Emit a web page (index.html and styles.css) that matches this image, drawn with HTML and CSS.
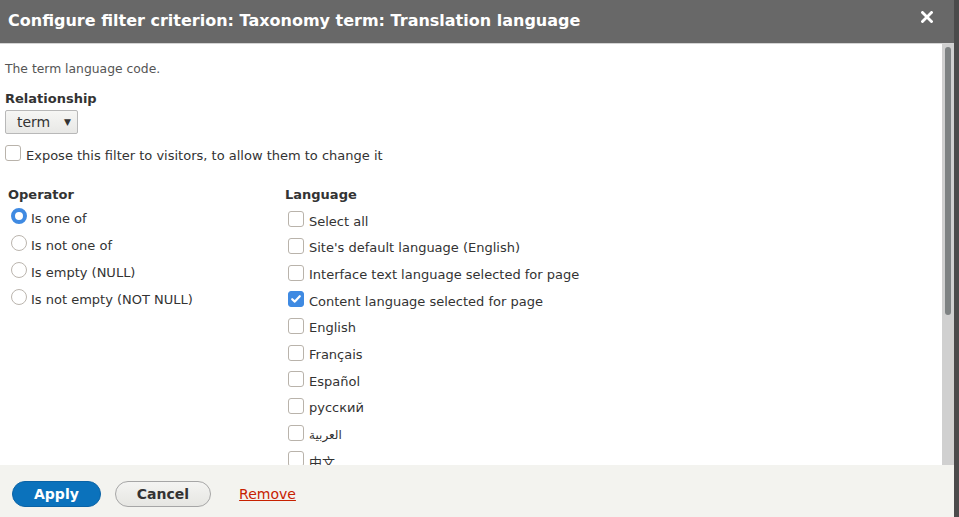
FILE: index.html
```html
<!DOCTYPE html>
<html>
<head>
<meta charset="utf-8">
<link rel="stylesheet" href="styles.css">
</head>
<body>
<div class="dialog">
  <div class="titlebar">
    <span class="title">Configure filter criterion: Taxonomy term: Translation language</span>
    <span class="close"><svg width="12" height="12" viewBox="0 0 12 12"><path d="M1.5 1.5 L10.5 10.5 M10.5 1.5 L1.5 10.5" stroke="#fff" stroke-width="2.8" stroke-linecap="square"/></svg></span>
  </div>
  <div class="main">
    <div class="content">
      <div class="desc">The term language code.</div>
      <div class="label">Relationship</div>
      <div class="select"><span>term</span><span class="arrow">▼</span></div>
      <div class="expose"><span class="cb"></span><span>Expose this filter to visitors, to allow them to change it</span></div>
      <div class="cols">
        <div class="col-op">
          <div class="head">Operator</div>
          <div class="radio-row"><span class="radio checked"></span><span>Is one of</span></div>
          <div class="radio-row"><span class="radio"></span><span>Is not one of</span></div>
          <div class="radio-row"><span class="radio"></span><span>Is empty (NULL)</span></div>
          <div class="radio-row"><span class="radio"></span><span>Is not empty (NOT NULL)</span></div>
        </div>
        <div class="col-lang">
          <div class="head">Language</div>
          <div class="cb-row"><span class="cb"></span><span>Select all</span></div>
          <div class="cb-row"><span class="cb"></span><span>Site's default language (English)</span></div>
          <div class="cb-row"><span class="cb"></span><span>Interface text language selected for page</span></div>
          <div class="cb-row"><span class="cb checked"><svg width="12" height="12" viewBox="0 0 12 12"><path d="M2.2 6.2 L4.8 8.6 L9.8 3.2" fill="none" stroke="#fff" stroke-width="2.2" stroke-linecap="round" stroke-linejoin="round"/></svg></span><span>Content language selected for page</span></div>
          <div class="cb-row"><span class="cb"></span><span>English</span></div>
          <div class="cb-row"><span class="cb"></span><span>Français</span></div>
          <div class="cb-row"><span class="cb"></span><span>Español</span></div>
          <div class="cb-row"><span class="cb"></span><span>русский</span></div>
          <div class="cb-row"><span class="cb"></span><span class="ar">العربية</span></div>
          <div class="cb-row"><span class="cb"></span><span class="zh">中文</span></div>
        </div>
      </div>
    </div>
    <div class="scrollbar"><div class="thumb"></div></div>
  </div>
  <div class="footer">
    <span class="btn primary">Apply</span>
    <span class="btn">Cancel</span>
    <a class="remove" href="#">Remove</a>
  </div>
</div>
</body>
</html>
```
FILE: styles.css
```css
html, body {
  margin: 0;
  padding: 0;
  background: #4b4b4b;
  overflow: hidden;
}
body {
  font-family: "DejaVu Sans", Verdana, sans-serif;
  font-size: 13px;
  color: #333;
}
.dialog {
  width: 954px;
  height: 517px;
  display: flex;
  flex-direction: column;
  background: #fff;
}
.titlebar {
  height: 43px;
  flex: none;
  background: #686868;
  border-bottom: 1px solid #d4d4d4;
  display: flex;
  align-items: center;
  justify-content: space-between;
  padding: 0 21px 0 8px;
  color: #fff;
}
.title {
  font-weight: bold;
  font-size: 16px;
  position: relative;
  top: -1px;
}
.close {
  display: flex;
  position: relative;
  top: -5px;
}
.main {
  flex: 1;
  display: flex;
  min-height: 0;
  overflow: hidden;
}
.content {
  flex: 1;
  padding: 16px 0 0 5px;
  overflow: hidden;
}
.scrollbar {
  width: 12px;
  flex: none;
  background: #d0d0d0;
  padding: 3px 3px 0 3px;
  box-sizing: border-box;
}
.thumb {
  width: 6px;
  height: 268px;
  background: #7e8283;
  border-radius: 3px;
}
.desc {
  font-size: 12.35px;
  line-height: 18px;
  color: #555;
}
.label {
  margin-top: 12px;
  font-weight: bold;
  line-height: 18px;
}
.select {
  margin-top: 2px;
  width: 73px;
  height: 24px;
  box-sizing: border-box;
  border: 1px solid #b8b8b8;
  border-radius: 2px;
  background: linear-gradient(#f6f6f4, #e8e8e6);
  display: flex;
  align-items: center;
  justify-content: space-between;
  padding: 0 6px 0 11px;
  font-size: 14px;
}
.select .arrow {
  font-size: 9px;
  color: #333;
}
.expose {
  margin-top: 12px;
  display: flex;
  align-items: center;
  gap: 5px;
  height: 18px;
}
.cb {
  width: 16px;
  height: 16px;
  box-sizing: border-box;
  border: 1px solid #b9b3ab;
  border-radius: 3px;
  background: #fff;
  flex: none;
  display: flex;
  align-items: center;
  justify-content: center;
}
.cb.checked {
  background: #3f8ae2;
  border-color: #3f8ae2;
}
.expose .cb {
  position: relative;
  top: -2px;
}
.cols {
  margin-top: 22px;
  display: flex;
}
.col-op {
  width: 277px;
  padding-left: 3px;
}
.col-lang {
  flex: 1;
}
.head {
  font-weight: bold;
  line-height: 18px;
}
.radio-row {
  display: flex;
  align-items: center;
  gap: 4px;
  height: 27px;
  padding-left: 3px;
}
.col-op .head {
  margin-bottom: 1px;
}
.radio {
  width: 16px;
  height: 16px;
  box-sizing: border-box;
  border: 1px solid #bbb5ae;
  border-radius: 50%;
  background: #fff;
  flex: none;
  position: relative;
  top: -3px;
}
.radio.checked {
  border: 4px solid #3f8ae2;
}
.col-lang .head {
  margin-bottom: 4px;
}
.cb-row {
  display: flex;
  align-items: center;
  gap: 5px;
  height: 26.67px;
  padding-left: 3px;
}
.cb-row .cb {
  position: relative;
  top: -2px;
}
.ar {
  font-family: "DejaVu Sans", sans-serif;
  font-size: 12px;
}
.zh {
  font-family: "Noto Sans CJK SC", sans-serif;
}
.footer {
  height: 52px;
  flex: none;
  background: #f3f3ef;
  display: flex;
  align-items: center;
  padding-left: 12px;
  gap: 14px;
}
.btn {
  height: 26px;
  box-sizing: border-box;
  border-radius: 13px;
  border: 1px solid #a6a6a6;
  background: linear-gradient(#f4f4f2, #e6e6e2);
  font-weight: bold;
  font-size: 14px;
  color: #333;
  display: flex;
  align-items: center;
  justify-content: center;
  padding: 0 21px;
  margin-top: 6px;
}
.btn.primary {
  background: #0b72bc;
  border-color: #0a63a6;
  color: #fff;
  padding: 0 21px;
}
.remove {
  margin-left: 14px;
  margin-top: 6px;
  color: #c72100;
  font-size: 14px;
  text-decoration: underline;
}
```
